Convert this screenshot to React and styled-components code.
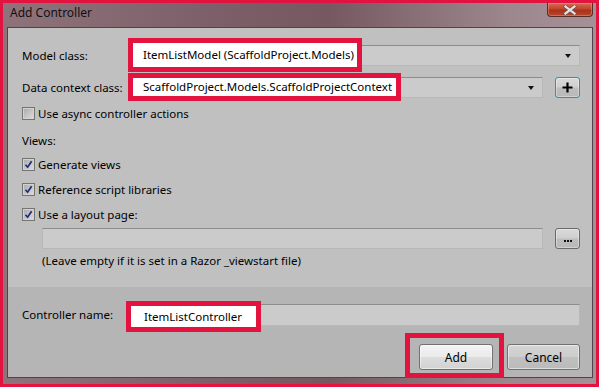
import React from 'react'
import styled, { createGlobalStyle } from 'styled-components'

const Global = createGlobalStyle`
  html, body { margin: 0; padding: 0; background: #e2133f; }
  body {
    font-family: "Noto Sans", "Liberation Sans", sans-serif;
    font-size: 11.5px;
    color: #000;
  }
`

const Shot = styled.div`
  width: 599px;
  height: 387px;
  box-sizing: border-box;
  border: 3px solid #e2133f;
  background: linear-gradient(90deg, #8f737b 0%, #7c5f68 35%, #765860 55%, #9c878d 85%, #a49197 100%);
  display: flex;
  flex-direction: column;
  padding: 0 3px 6px 4px;
`

const TitleBar = styled.div`
  height: 24px;
  display: flex;
  align-items: flex-start;
  justify-content: space-between;
  margin-left: -4px;
  margin-right: -3px;
  padding-left: 7px;
`

const Title = styled.span`
  font-size: 12px;
  line-height: 16px;
  padding-top: 2px;
  color: #111;
`

const CloseBtn = styled.div`
  width: 44px;
  height: 13px;
  margin-right: 3px;
  border: 1px solid #5b2b27;
  border-top: none;
  border-radius: 0 0 4px 4px;
  background: linear-gradient(#d66c55 0%, #c2452c 45%, #a8321c 55%, #b8452c 100%);
  display: flex;
  align-items: center;
  justify-content: center;
  box-shadow: inset 0 0 0 1px rgba(255, 190, 170, 0.35);
`

const Client = styled.div`
  flex: 1;
  border: 1px solid #4f4448;
  background: #c0c0c0;
  display: flex;
  flex-direction: column;
`

const TopSection = styled.div`
  padding: 17px 12px 0 14px;
  flex: 1;
  display: flex;
  flex-direction: column;
`

const BottomSection = styled.div`
  height: 90px;
  box-sizing: border-box;
  background: #b5b5b5;
  padding: 17px 12px 0 14px;
  display: flex;
  flex-direction: column;
`

const Row = styled.div`
  display: flex;
  align-items: center;
  height: ${p => p.h || 21}px;
  margin-top: ${p => p.mt || 0}px;
  padding-left: ${p => p.indent || 0}px;
`

const Label = styled.span`
  width: 108px;
  flex: none;
  white-space: nowrap;
  line-height: 16px;
`

const Field = styled.div`
  position: relative;
  flex: 1;
  align-self: stretch;
  background: #cbcbcb;
  border: 1px solid #b8b8b8;
  border-top-color: #8c8c8c;
  box-sizing: border-box;
  display: flex;
  align-items: center;
  justify-content: flex-end;
  padding-right: 8px;
`

const Arrow = styled.span`
  width: 0;
  height: 0;
  border-left: 3.5px solid transparent;
  border-right: 3.5px solid transparent;
  border-top: 4px solid #111;
  margin-top: 1px;
`

const Mark = styled.div`
  position: absolute;
  left: ${p => p.l}px;
  top: ${p => p.t}px;
  width: ${p => p.w}px;
  height: ${p => p.h}px;
  box-sizing: border-box;
  border: 5px solid #e2133f;
  background: ${p => (p.clear ? 'transparent' : '#fff')};
  display: flex;
  align-items: center;
  padding-left: ${p => p.pl || 10}px;
  white-space: nowrap;
  line-height: 16px;
`

const SmallBtn = styled.div`
  width: 25px;
  margin-left: 12px;
  flex: none;
  align-self: stretch;
  box-sizing: border-box;
  border: 1px solid ${p => (p.focus ? '#3a8cb0' : '#6a6a6a')};
  border-radius: 3px;
  background: linear-gradient(#dadada 0%, #cfcfcf 48%, #bdbdbd 52%, #b9b9b9 100%);
  box-shadow: inset 0 0 0 1px rgba(255, 255, 255, 0.35);
  display: flex;
  align-items: ${p => (p.low ? 'flex-end' : 'center')};
  padding-bottom: ${p => (p.low ? 6 : 0)}px;
  justify-content: center;
`

const Check = styled.span`
  width: 13px;
  height: 13px;
  box-sizing: border-box;
  border: 1px solid #747474;
  background: linear-gradient(135deg, #a9a9a9 0%, #c9c9c9 60%, #dcdcdc 100%);
  box-shadow: inset 0 0 0 1px #d3d3d3;
  display: flex;
  align-items: center;
  justify-content: center;
  flex: none;
`

const CheckText = styled.span`
  margin-left: 3px;
  line-height: 16px;
`

const Note = styled.div`
  margin-top: ${p => p.mt || 0}px;
  padding-left: ${p => p.indent || 0}px;
  line-height: 16px;
`

const Buttons = styled.div`
  display: flex;
  justify-content: flex-end;
  gap: 14px;
  margin-top: 18px;
`

const Button = styled.div`
  position: relative;
  width: ${p => p.w || 74}px;
  height: 26px;
  box-sizing: border-box;
  border: 1px solid #707070;
  border-radius: 3px;
  background: ${p =>
    p.primary
      ? 'linear-gradient(#f3f3f3 0%, #ebebeb 48%, #dcdcdc 52%, #d2d2d2 100%)'
      : 'linear-gradient(#d4d4d4 0%, #cdcdcd 48%, #c0c0c0 52%, #bababa 100%)'};
  box-shadow: inset 0 0 0 1px rgba(255, 255, 255, 0.5);
  display: flex;
  align-items: center;
  justify-content: center;
  font-size: 12px;
`

function CheckBox({ checked }) {
  return (
    <Check>
      {checked && (
        <svg width="9" height="9" viewBox="0 0 9 9">
          <path d="M1.5 4.8 L3.6 7.2 L7.6 1.2" fill="none" stroke="#1c2a7c" strokeWidth="1.7" />
        </svg>
      )}
    </Check>
  )
}

export default function App() {
  return (
    <>
      <Global />
      <Shot>
        <TitleBar>
          <Title>Add Controller</Title>
          <CloseBtn>
            <svg width="14" height="10" viewBox="0 0 14 10">
              <path d="M2.5 1.5 L11.5 8.5 M11.5 1.5 L2.5 8.5" stroke="#7a5652" strokeWidth="4" strokeLinecap="square" />
              <path d="M2.5 1.5 L11.5 8.5 M11.5 1.5 L2.5 8.5" stroke="#e8e2e2" strokeWidth="2.2" strokeLinecap="square" />
            </svg>
          </CloseBtn>
        </TitleBar>
        <Client>
          <TopSection>
            <Row>
              <Label>Model class:</Label>
              <Field>
                <Mark l={-3} t={-8} w={234} h={34} pl={10}>ItemListModel (ScaffoldProject.Models)</Mark>
                <Arrow />
              </Field>
            </Row>
            <Row mt={11}>
              <Label>Data context class:</Label>
              <Field>
                <Mark l={-3} t={-5} w={273} h={28} pl={10}>ScaffoldProject.Models.ScaffoldProjectContext</Mark>
                <Arrow />
              </Field>
              <SmallBtn focus>
                <svg width="11" height="11" viewBox="0 0 11 11">
                  <path d="M5.5 0.5 V10.5 M0.5 5.5 H10.5" stroke="#000" strokeWidth="2.2" />
                </svg>
              </SmallBtn>
            </Row>
            <Row h={13} mt={9}>
              <CheckBox />
              <CheckText>Use async controller actions</CheckText>
            </Row>
            <Note mt={13}>Views:</Note>
            <Row h={13} mt={9}>
              <CheckBox checked />
              <CheckText>Generate views</CheckText>
            </Row>
            <Row h={13} mt={12}>
              <CheckBox checked />
              <CheckText>Reference script libraries</CheckText>
            </Row>
            <Row h={13} mt={12}>
              <CheckBox checked />
              <CheckText>Use a layout page:</CheckText>
            </Row>
            <Row mt={7} indent={20}>
              <Field />
              <SmallBtn low>
                <svg width="8" height="2" viewBox="0 0 8 2">
                  <rect x="0" y="0" width="2" height="2" fill="#111" />
                  <rect x="3" y="0" width="2" height="2" fill="#111" />
                  <rect x="6" y="0" width="2" height="2" fill="#111" />
                </svg>
              </SmallBtn>
            </Row>
            <Note mt={4} indent={20}>(Leave empty if it is set in a Razor _viewstart file)</Note>
          </TopSection>
          <BottomSection>
            <Row h={22}>
              <Label>Controller name:</Label>
              <Field>
                <Mark l={-5} t={-4} w={135} h={31} pl={13}>ItemListController</Mark>
              </Field>
            </Row>
            <Buttons>
              <Button primary>
                Add
                <Mark clear l={-15} t={-12} w={99} h={45} />
              </Button>
              <Button w={73}>Cancel</Button>
            </Buttons>
          </BottomSection>
        </Client>
      </Shot>
    </>
  )
}
